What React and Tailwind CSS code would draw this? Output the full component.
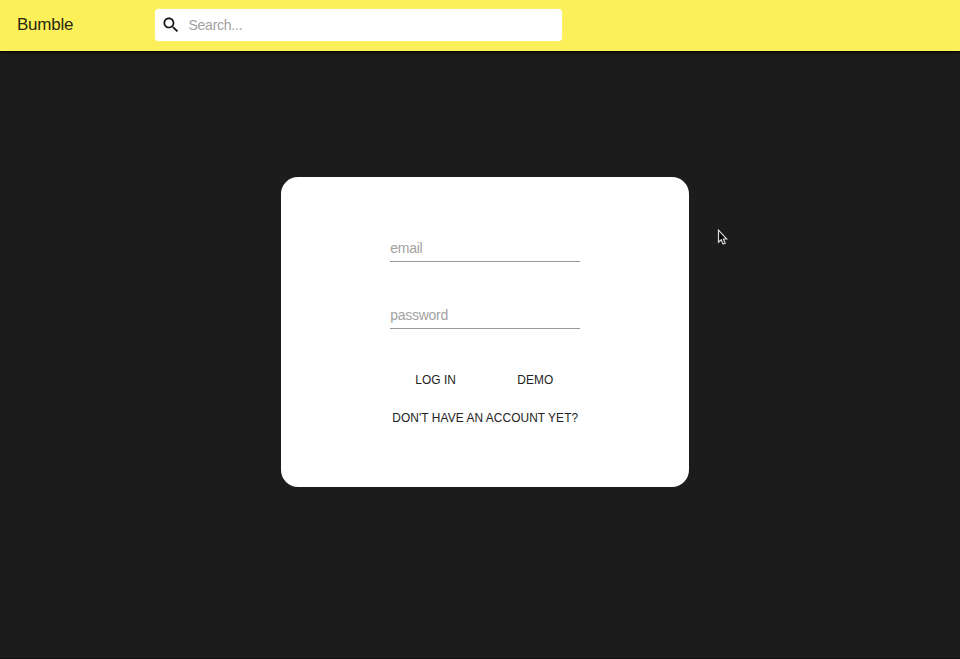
function SearchIcon() {
  return (
    <svg viewBox="0 0 24 24" className="h-5 w-5 shrink-0" fill="#111111">
      <path d="M15.5 14h-.79l-.28-.27C15.41 12.59 16 11.11 16 9.5 16 5.91 13.09 3 9.5 3S3 5.91 3 9.5 5.91 16 9.5 16c1.61 0 3.09-.59 4.23-1.57l.27.28v.79l5 4.99L20.49 19l-4.99-5zm-6 0C7.01 14 5 11.99 5 9.5S7.01 5 9.5 5 14 7.01 14 9.5 11.99 14 9.5 14z" />
    </svg>
  );
}

function Field({ label }) {
  return (
    <div className="flex h-[27px] w-full items-center border-b border-[#979797]">
      <span className="text-[14px] leading-4 tracking-[-0.27px] text-[#a2a2a2]">{label}</span>
    </div>
  );
}

function TextButton({ children }) {
  return (
    <button className="text-[11.9px] leading-5 tracking-[0.08px] whitespace-nowrap text-[#222222] uppercase">
      {children}
    </button>
  );
}

function Pointer() {
  return (
    <svg viewBox="0 0 11 17" className="absolute top-[229px] left-[717px] h-[17px] w-[11px]">
      <path
        d="M1.5 1.2 V13.2 L4.2 10.7 L6.1 15 L8.2 14.1 L6.4 10 H9.8 Z"
        fill="#050505"
        stroke="#dcdcdc"
        strokeWidth="1.2"
      />
    </svg>
  );
}

export default function App() {
  return (
    <div className="relative flex h-[659px] w-[960px] flex-col overflow-hidden border-b border-[#101010] bg-[#1c1c1c] font-['Liberation_Sans',Arial,sans-serif]">
      <header className="flex h-[51px] shrink-0 items-center bg-[#fcf05a] pb-px pl-[17px] shadow-[0_1px_3px_#000000]">
        <h1 className="w-[137.5px] text-[17px] leading-6 tracking-[-0.25px] text-[#2a2810]">Bumble</h1>
        <div className="flex h-8 w-[407.5px] items-center gap-2 rounded bg-white pl-1.5 shadow-[0_0_1px_#ffffff]">
          <SearchIcon />
          <span className="text-[14px] leading-4 tracking-[-0.25px] text-[#a2a2a2]">Search...</span>
        </div>
      </header>
      <main className="flex flex-1 justify-center pt-[126px] pl-[10.5px]">
        <section className="flex h-[310px] w-[408px] flex-col items-center rounded-[17px] bg-white pt-[58px]">
          <form className="flex w-[190px] flex-col">
            <Field label="email" />
            <div className="h-10" />
            <Field label="password" />
            <div className="mt-[41px] flex justify-between pr-[27px] pl-[25px]">
              <TextButton>Log in</TextButton>
              <TextButton>Demo</TextButton>
            </div>
            <div className="mt-[18px] flex justify-center">
              <TextButton>Don't have an account yet?</TextButton>
            </div>
          </form>
        </section>
      </main>
      <Pointer />
    </div>
  );
}
